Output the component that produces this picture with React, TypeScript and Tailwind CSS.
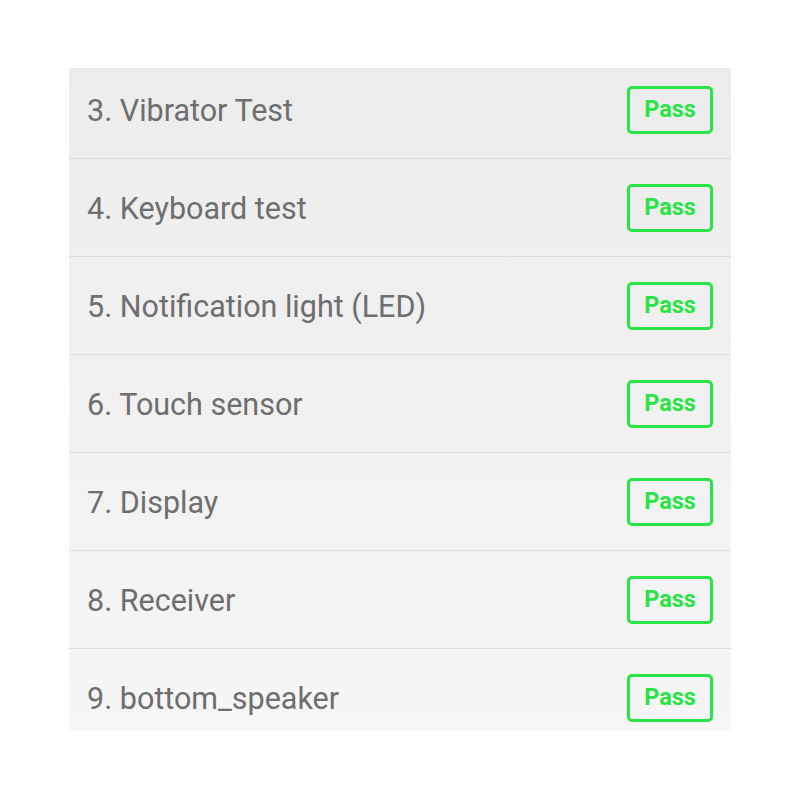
import React from "react";

const tests = [
  "3. Vibrator Test",
  "4. Keyboard test",
  "5. Notification light (LED)",
  "6. Touch sensor",
  "7. Display",
  "8. Receiver",
  "9. bottom_speaker",
];

export default function App() {
  return (
    <div className="w-[800px] h-[800px] bg-white pt-[68px] pl-[69px]" style={{ fontFamily: "Roboto, 'Liberation Sans', sans-serif" }}>
      <div className="w-[662px] h-[663px] overflow-hidden bg-gradient-to-b from-[#ececec] to-[#f6f6f6]">
        <div className="-mt-[7px]">
          {tests.map((t) => (
            <div key={t} className="h-[98px] flex items-center justify-between pl-[18px] pr-[18px] border-b border-[#dcdcdc]">
              <span className="text-[30.5px] text-[#6e6e6e] leading-none pt-[3px]">{t}</span>
              <span className="w-[86px] h-[48px] flex items-center justify-center border-[3px] border-[#28e444] rounded-[5px] text-[#28e444] font-bold text-[23.5px]">
                Pass
              </span>
            </div>
          ))}
        </div>
      </div>
    </div>
  );
}
